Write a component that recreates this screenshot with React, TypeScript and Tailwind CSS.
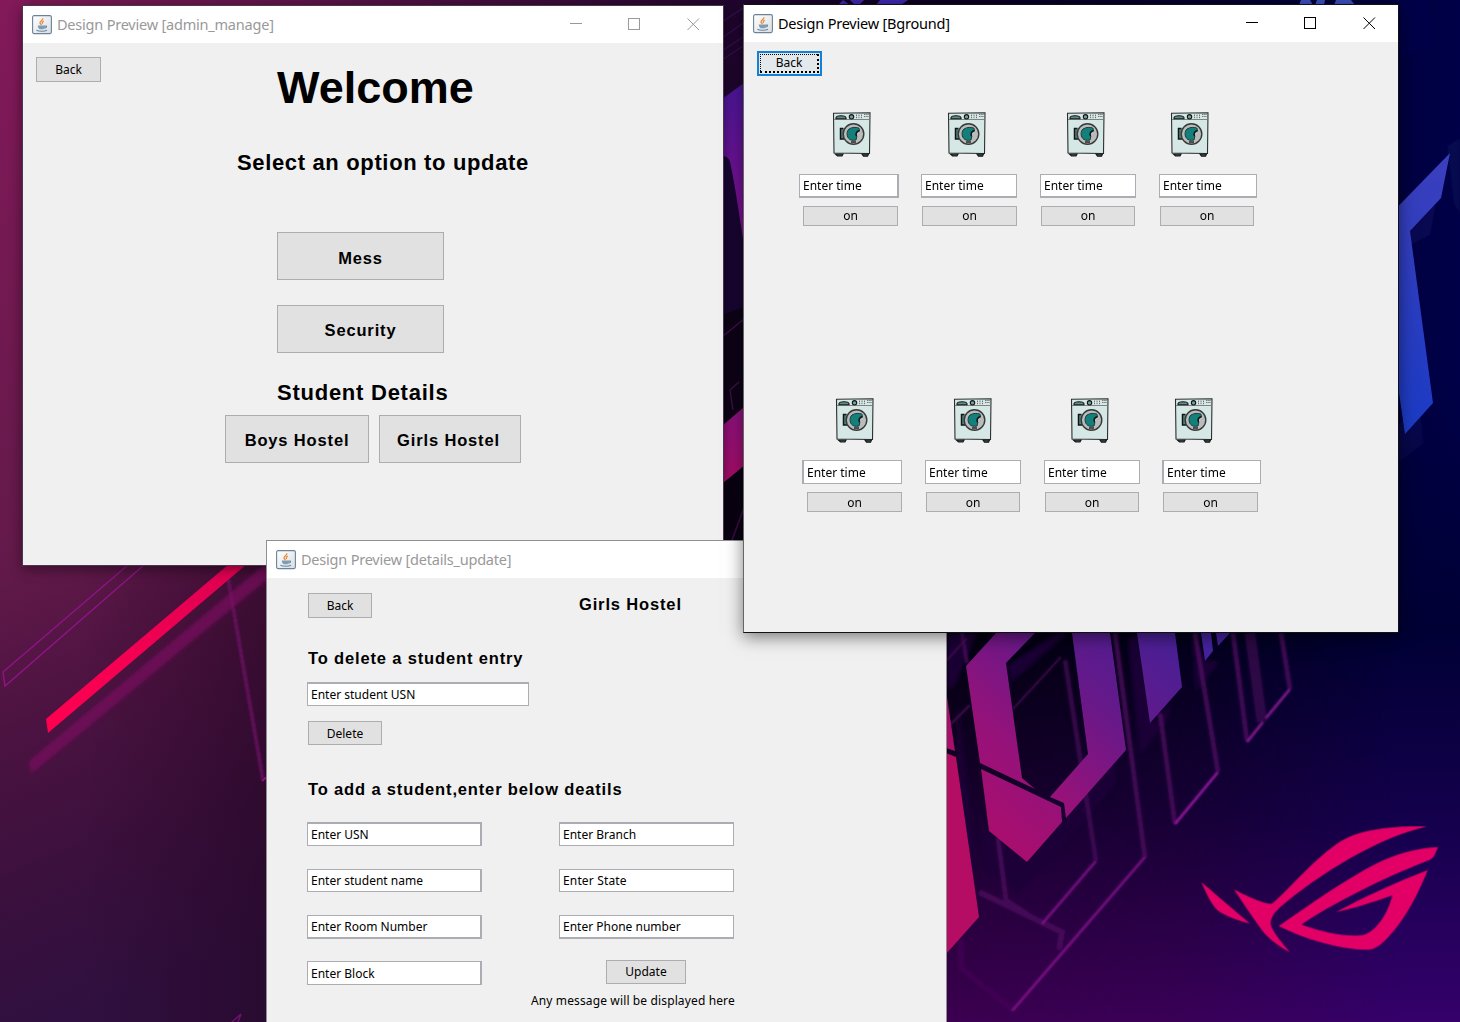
import React from "react";

const UI = "font-['Noto_Sans',sans-serif]";

function JavaIcon() {
  return (
    <svg width="20" height="20" viewBox="0 0 20 20" className="shrink-0">
      <defs>
        <linearGradient id="jv" x1="0" y1="0" x2="1" y2="1">
          <stop offset="0" stopColor="#ffffff" />
          <stop offset="1" stopColor="#d9dde2" />
        </linearGradient>
      </defs>
      <rect x="0.6" y="0.6" width="18.8" height="18" rx="1.5" fill="url(#jv)" stroke="#6b8299" strokeWidth="1.1" />
      <path d="M10.8 3.2C11.4 5.2 7.6 6 8 8c.2 1 1.2 1.300 1.400 2.200M11.800 6.200C10.200 7 9.800 7.800 10.600 9" fill="none" stroke="#ee8a3c" strokeWidth="1.300" />
      <path d="M5.800 10.600h7.400c0 2-.8 3.400-2 3.600H7.900c-1.200-.2-2-1.600-2.100-3.600z" fill="#7e9cb4" />
      <path d="M13 11.200c2.200-.7 2.200 1.400-.6 2M4.400 15.200c2.400 1.300 8 1.300 10.600 0" fill="none" stroke="#6485a0" strokeWidth="1.100" />
    </svg>
  );
}

function TitleBar({ title, active, controls = true }: { title: string; active?: boolean; controls?: boolean }) {
  return (
    <div className={"flex h-[37px] shrink-0 items-center bg-white pl-[9px] " + (active ? "text-black" : "text-[#999999]")}>
      <JavaIcon />
      <span className={"ml-[5px] whitespace-nowrap text-[14.5px] leading-none tracking-[-0.21px] " + UI}>{title}</span>
      {controls && (
        <svg
          width="140"
          height="20"
          viewBox="0 0 140 20"
          className={"ml-auto " + (active ? "mb-px mr-[15px]" : "mb-px mr-[16px]")}
          fill="none"
          stroke="currentColor"
          shapeRendering="crispEdges"
        >
          <path d="M3 9.500H15M61.500 4.500h11v11h-11z" />
          <path d="M120.500 4.500l11.500 11.500M132 4.500L120.500 16" shapeRendering="auto" />
        </svg>
      )}
    </div>
  );
}

function Button({ label, className }: { label: string; className: string }) {
  return (
    <button className={"flex shrink-0 items-center justify-center border border-[#adadad] bg-[#e1e1e1] leading-none text-black " + className}>
      {label}
    </button>
  );
}

const SMALL = "font-['Noto_Sans',sans-serif] text-[12px]";
const BIG = "font-['Liberation_Sans',sans-serif] font-bold text-[16.5px] tracking-[0.85px]";

function Field({ value, className }: { value: string; className: string }) {
  return (
    <div className={"flex shrink-0 items-center whitespace-nowrap border border-[#abadb3] bg-white pl-[3px] text-[12px] leading-none text-black " + UI + " " + className}>
      {value}
    </div>
  );
}

function Washer() {
  return (
    <svg width="40" height="46" viewBox="0 0 40 46" className="block shrink-0">
      <path d="M1.500 1.200L38 .8 37.500 41.500 2 41z" fill="#d6e8e6" stroke="#2b2f30" strokeWidth="1.100" />
      <path d="M2 7.500H38" stroke="#777" strokeWidth=".9" />
      <path d="M4 5.600c1-2.400 9-2.400 10 0v1.100H4z" fill="#5b8f8d" stroke="#141414" strokeWidth="1.100" />
      <circle cx="19.500" cy="4.800" r="2.200" fill="#6ba3a1" stroke="#141414" strokeWidth="1.100" />
      <path d="M24.500 2.500v4M27 2.500v4M29.500 2.500v4M32 4.500h5M32 2.500h5" stroke="#555" strokeWidth=".8" strokeDasharray="1.500 .7" />
      <path d="M11.500 16.500H8.500v10.500h3.500" fill="#4e8583" stroke="#141414" strokeWidth="1.500" />
      <circle cx="21.500" cy="22" r="10.300" fill="#b9bcbb" stroke="#383838" strokeWidth="1.400" />
      <path d="M17 17c3-2 7.500-2 10-.8l.5 2.800c-3 .6-4.200 3-2.700 5.500L24 28c-3.500.8-6 .2-7.500-1.800C14.500 23.500 14.500 19.500 17 17z" fill="#14807c" stroke="#173d3d" strokeWidth="1" />
      <path d="M27.300 18.800c-3 .6-4 3-2.700 5.500" fill="none" stroke="#111" strokeWidth="1.400" />
      <path d="M19 30h5" stroke="#333" strokeWidth="1.600" />
      <path d="M3.500 42h7.500l-1 1.800H5.500zM30 42h6.500l-1 2.200h-4z" fill="#315b59" stroke="#1b1b1b" strokeWidth="1.200" />
    </svg>
  );
}

function Wallpaper() {
  return (
    <svg width="1460" height="1022" viewBox="0 0 1460 1022" className="absolute inset-0">
      <defs>
        <linearGradient id="bg" x1="0" y1="0" x2="1" y2="0">
          <stop offset="0" stopColor="#7e1a54" />
          <stop offset=".2" stopColor="#5e1448" />
          <stop offset=".5" stopColor="#21062c" />
          <stop offset=".64" stopColor="#0c0020" />
          <stop offset=".86" stopColor="#030030" />
          <stop offset="1" stopColor="#000048" />
        </linearGradient>
        <linearGradient id="lt" x1="0" y1="0" x2="0" y2="1">
          <stop offset="0" stopColor="#83195a" />
          <stop offset="1" stopColor="#631a4a" />
        </linearGradient>
        <linearGradient id="lb" x1="0" y1="0" x2=".25" y2="1">
          <stop offset="0" stopColor="#631a4a" />
          <stop offset=".35" stopColor="#4c1341" />
          <stop offset=".7" stopColor="#3a103d" />
          <stop offset="1" stopColor="#2f1040" />
        </linearGradient>
        <linearGradient id="ld" x1="0" y1="0" x2="1" y2="0">
          <stop offset="0" stopColor="#2a0420" stopOpacity="0" />
          <stop offset="1" stopColor="#22041f" stopOpacity=".5" />
        </linearGradient>
        <linearGradient id="rb" x1="0" y1="0" x2="0" y2="1">
          <stop offset="0" stopColor="#04000f" />
          <stop offset=".45" stopColor="#17002b" />
          <stop offset="1" stopColor="#3c0050" />
        </linearGradient>
        <linearGradient id="rv" x1="0" y1="0" x2="0" y2="1">
          <stop offset="0" stopColor="#000035" />
          <stop offset=".5" stopColor="#15004d" />
          <stop offset="1" stopColor="#35006a" />
        </linearGradient>
        <linearGradient id="re" x1="0" y1="0" x2="0" y2="1">
          <stop offset="0" stopColor="#000035" stopOpacity="0" />
          <stop offset="1" stopColor="#000035" />
        </linearGradient>
        <linearGradient id="fade" x1="0" y1="0" x2="1" y2="0">
          <stop offset="0" stopColor="#000" />
          <stop offset=".45" stopColor="#444" />
          <stop offset=".88" stopColor="#fff" />
        </linearGradient>
        <mask id="fm"><rect x="946" y="630" width="514" height="392" fill="url(#fade)" /></mask>
        <linearGradient id="ltr" gradientUnits="userSpaceOnUse" x1="980" y1="860" x2="1180" y2="640">
          <stop offset="0" stopColor="#b00c69" />
          <stop offset=".35" stopColor="#95127a" />
          <stop offset=".68" stopColor="#64198a" />
          <stop offset="1" stopColor="#472096" />
        </linearGradient>
        <linearGradient id="pv" x1="0" y1="0" x2="0" y2="1">
          <stop offset="0" stopColor="#4c169c" />
          <stop offset="1" stopColor="#8a1090" />
        </linearGradient>
        <linearGradient id="pk" x1="0" y1="0" x2="0" y2="1">
          <stop offset="0" stopColor="#8c1282" />
          <stop offset="1" stopColor="#ad0d68" />
        </linearGradient>
        <linearGradient id="bl" x1="0" y1="0" x2="0" y2="1">
          <stop offset="0" stopColor="#3b3fbd" />
          <stop offset="1" stopColor="#1b3bc4" />
        </linearGradient>
        <linearGradient id="rd" x1="0" y1="1" x2="1" y2="0">
          <stop offset="0" stopColor="#ff0050" />
          <stop offset=".4" stopColor="#f50052" />
          <stop offset="1" stopColor="#dc0050" />
        </linearGradient>
        <filter id="b2"><feGaussianBlur stdDeviation="2" /></filter>
        <filter id="b1"><feGaussianBlur stdDeviation="0.8" /></filter>
      </defs>
      <rect width="1460" height="1022" fill="url(#bg)" />
      <rect width="30" height="560" fill="url(#lt)" />
      <rect y="560" width="280" height="462" fill="url(#lb)" />
      <rect y="560" x="80" width="200" height="462" fill="url(#ld)" />

      {/* light streaks at the left */}
      <g fill="none" stroke="#8d1386" strokeWidth="1.500">
        <path d="M128 565L3 672 5 686 144 565" />
        <path d="M232 1022L241 1014 238 1022" opacity=".7" />
      </g>
      <path d="M228 578L263 780" stroke="#74136c" strokeWidth="3.500" opacity=".7" filter="url(#b1)" />
      <path d="M262 781l6-5" stroke="#a01890" strokeWidth="1.500" />
      <path d="M29 761L270 560v17L31 774z" fill="#7c1060" opacity=".7" filter="url(#b2)" />
      <path d="M46 719L229 564h18L48 733z" fill="url(#rd)" />

      {/* strip between the upper windows */}
      <rect x="722" y="0" width="24" height="545" fill="#190633" />
      <path d="M722 0h24v90l-24 14z" fill="#20062e" />
      <path d="M722 22l24-16M722 38l24-17M722 51l24-16M722 60l24-16" stroke="#34104f" strokeWidth="1.300" />
      <path d="M722 99L744 83V245C738 205 734 180 730 162 728 155 722 156 722 156z" fill="url(#pv)" />
      <path d="M722 315l22-8v103l-22 14z" fill="#0e0417" />
      <path d="M722 337L744 319M733 410l-3-20 9-8" fill="none" stroke="#45104f" strokeWidth="1.300" />
      <path d="M722 426L744 407V466L722 484z" fill="url(#pk)" />
      <path d="M722 484L744 466V545H722z" fill="#0a0212" />
      <path d="M732 540l12-32" stroke="#3d0d49" strokeWidth="1.500" />

      {/* top edge */}
      <path d="M838 5l5-5 7 5zM850 0h14l-5 5h-4zM880 0h28l-7 5h-25z" fill="#3f29ae" />
      <path d="M1299 5l2-5h9l3 5zM1315 5l2-5h8l-1 5zM1336 0h15l4 5h-21z" fill="#3c50bd" />

      {/* right edge */}
      <path d="M1399 60l33-17-4-43h-29z" fill="#06064e" opacity=".6" filter="url(#b1)" />
      <path d="M1410 245l20-10 6-32-26 28zM1399 462l24-18-3-40-21 20z" fill="#0b0f58" opacity=".7" filter="url(#b1)" />
      <path d="M1447 146l13-8v76l-6-10z" fill="#091256" opacity=".5" filter="url(#b1)" />
      <rect x="1398" y="380" width="62" height="250" fill="url(#re)" />
      <path d="M1398 206.500L1450 153 1441 198 1410 231 1433 403 1405 434 1398 386z" fill="url(#bl)" />

      {/* lower right */}
      <rect x="946" y="630" width="514" height="392" fill="url(#rb)" />
      <rect x="946" y="630" width="514" height="392" fill="url(#rv)" mask="url(#fm)" />
      <g fill="#1c0638" filter="url(#b2)" opacity=".9">
        <path d="M947 633h30l-22 52-8 5zM957 700l20 160-10 20-10-120zM1008 665l50-32h10l-58 50zM1128 640l12 115 26-32 6-20-20 20-15-90zM1192 633l4 58 24-30-15 0zM978 808l8 60 32 24 44-46 52-60 3-30-90 108-38-30z" />
      </g>
      <g fill="none" stroke="#4b0a5c" strokeWidth="5" filter="url(#b1)" opacity=".8">
        <path d="M1115 633L1145 858" />
        <path d="M1195 633L1218 772" />
        <path d="M1160 713L1175 824" />
        <path d="M1233 633L1247 741" />
        <path d="M1281 633L1290 689" />
        <path d="M1250 633L1262 722" strokeWidth="11" opacity=".7" />
        <path d="M1065 660L1096 861" opacity=".8" />
        <path d="M998 838L1006 900 1029 915" />
        <path d="M979 892L1062 932 1059 950" strokeWidth="6" />
        <path d="M961 940V968L1012 1009" strokeWidth="6" opacity=".6" />
        <path d="M962 633L967 663" strokeWidth="4" />
      </g>
      <g fill="none" stroke="#8b1790" strokeWidth="1.800" filter="url(#b1)">
        <path d="M1218 772L1175 824" stroke="#a91db0" strokeWidth="2.200" />
        <path d="M1247 742L1263 722M1266 718L1290 689" stroke="#9a219f" strokeWidth="2.200" />
        <path d="M1145 857L1012 1011" strokeWidth="2.200" />
        <path d="M1096 861L1042 924" strokeWidth="2.200" />
        <path d="M1061 657L1013 709M970 705l-20 20M947 660l20-22" stroke="#4a0d55" />
      </g>
      <g fill="url(#ltr)">
        <path d="M966 666L996 633H1035L1006 663 1022 778 1035 789 980 763z" />
        <path d="M1072 633H1110L1126 750 1066 818 1064 803 1050 797 1088 754z" />
        <path d="M981 769L1061 807 1062 822 1027 862 989 831z" />
        <path d="M1137 633H1175L1182 687 1150 723z" />
      </g>
      <path d="M1201 633H1211L1213 651 1205 661zM1216 633H1230L1218 646z" fill="#45229f" />
      <path d="M946 753L956 757 979 917 946 954z" fill="#b50c64" />
      <path d="M946 690L955 751 946 748z" fill="#a80e6c" />

      {/* ROG eye emblem */}
      <g transform="translate(1180 810) scale(.33333)" fill="#e30066">
        <path d="M64 216C90 238 172 308 210 340 182 334 130 316 112 300 94 284 74 240 64 216z" />
        <path d="M162 238C192 254 254 284 276 281 316 250 424 120 500 84 560 54 670 46 740 50 600 80 420 190 300 292 276 314 268 334 274 350 284 374 312 406 330 426 300 412 262 384 244 358 214 316 184 272 162 238z" />
        <path d="M296 348C400 276 500 206 590 160 650 130 712 114 774 111L766 130C760 146 752 148 738 154 610 204 450 284 364 344 430 368 510 384 554 374 600 356 628 294 637 256 580 276 520 296 468 306 550 262 640 220 743 180 720 240 680 318 640 364 620 386 600 412 570 419 480 420 372 386 296 348z" />
      </g>
    </svg>
  );
}

type Machine = { cell: string; washer: string; field: string; btn: string };

const upperMachines: Machine[] = [
  { cell: "w-[122px]", washer: "ml-[33px]", field: "w-[100px] border-r-2 border-b-2", btn: "ml-[4px] w-[95px]" },
  { cell: "w-[119px]", washer: "ml-[26px]", field: "w-[96px] border-b-2", btn: "ml-[1px] w-[95px]" },
  { cell: "w-[119px]", washer: "ml-[26px]", field: "w-[96px] border-b-2", btn: "ml-[1px] w-[94px]" },
  { cell: "w-[119px]", washer: "ml-[11px]", field: "w-[98px] border-b-2", btn: "ml-[1px] w-[94px]" },
];

const lowerMachines: Machine[] = [
  { cell: "w-[123px]", washer: "ml-[33px]", field: "w-[100px] border-l-2 pl-[2px]", btn: "ml-[5px] w-[95px]" },
  { cell: "w-[119px]", washer: "ml-[28px]", field: "w-[96px]", btn: "ml-[1px] w-[94px]" },
  { cell: "w-[118px]", washer: "ml-[26px]", field: "w-[96px]", btn: "ml-[1px] w-[94px]" },
  { cell: "w-[119px]", washer: "ml-[12px]", field: "w-[99px] border-l-2 pl-[2px]", btn: "ml-[1px] w-[95px]" },
];

function MachineRow({ machines, className, text = "" }: { machines: Machine[]; className: string; text?: string }) {
  return (
    <div className={"flex " + className}>
      {machines.map((m, i) => (
        <div key={i} className={"flex shrink-0 flex-col " + m.cell}>
          <div className={m.washer}><Washer /></div>
          <Field value="Enter time" className={"mt-4 h-6 " + m.field + " " + text} />
          <Button label="on" className={SMALL + " mt-2 h-5 " + m.btn + " " + text} />
        </div>
      ))}
    </div>
  );
}

function AdminWindow() {
  return (
    <section className="absolute left-[22px] top-[5px] flex h-[561px] w-[702px] flex-col border border-[#4b3550] bg-[#f0f0f0] shadow-[0_3px_12px_rgba(0,0,0,0.45)]">
      <TitleBar title="Design Preview [admin_manage]" />
      <div className="flex h-[500px] flex-col font-['Liberation_Sans',sans-serif] font-bold leading-none text-black">
        <div className="flex items-start">
          <Button label="Back" className={SMALL + " ml-[13px] mt-[14px] h-[25px] w-[65px] font-normal"} />
          <h1 className="ml-[176px] mt-[22px] text-[45px] leading-[45px]">Welcome</h1>
        </div>
        <h2 className="ml-[214px] mt-[42px] text-[22px] leading-[22px] tracking-[0.65px]">Select an option to update</h2>
        <Button label="Mess" className={BIG + " ml-[254px] mt-[58px] h-12 w-[167px] pt-[4px]"} />
        <Button label="Security" className={BIG + " ml-[254px] mt-[25px] h-12 w-[167px] pt-[2px]"} />
        <h2 className="ml-[254px] mt-[29px] text-[22px] leading-[22px] tracking-[0.75px]">Student Details</h2>
        <div className="ml-[202px] mt-[11px] flex gap-[10px]">
          <Button label="Boys Hostel" className={BIG + " h-12 w-[144px] pt-[2px]"} />
          <Button label="Girls Hostel" className={BIG + " h-12 w-[142px] pr-[3px] pt-[2px]"} />
        </div>
      </div>
    </section>
  );
}

function DetailsWindow() {
  const heading = BIG + " leading-[17px] whitespace-nowrap";
  return (
    <section className="absolute left-[266px] top-[540px] flex h-[482px] w-[681px] flex-col overflow-hidden border border-b-0 border-[#8f8f8f] bg-[#f0f0f0]">
      <TitleBar title="Design Preview [details_update]" controls={false} />
      <div className="flex flex-col items-start pl-[40px] text-black">
        <div className="flex items-start">
          <Button label="Back" className={SMALL + " ml-px mt-[15px] h-[25px] w-[64px]"} />
          <h3 className={heading + " ml-[207px] mt-[18px]"}>Girls Hostel</h3>
        </div>
        <h3 className={heading + " ml-px mt-[32px]"}>To delete a student entry</h3>
        <Field value="Enter student USN" className="mt-[15px] h-6 w-[222px] border-t-2" />
        <Button label="Delete" className={SMALL + " ml-px mt-[15px] h-6 w-[74px] pt-[2px]"} />
        <h3 className={heading + " ml-px mt-[36px]"}>To add a student,enter below deatils</h3>
        <div className="mt-[24px] flex gap-[77px]">
          <div className="flex flex-col">
            <Field value="Enter USN" className="h-6 w-[175px] border-r-2 border-t-2" />
            <Field value="Enter student name" className="mt-[23px] h-[23px] w-[175px] border-r-2" />
            <Field value="Enter Room Number" className="mt-[23px] h-6 w-[175px] border-b-2 border-r-2" />
            <Field value="Enter Block" className="mt-[22px] h-6 w-[175px] border-r-2 pt-[2px]" />
          </div>
          <div className="flex flex-col">
            <Field value="Enter Branch" className="h-6 w-[175px] border-t-2" />
            <Field value="Enter State" className="mt-[23px] h-[23px] w-[175px] tracking-[0.15px]" />
            <Field value="Enter Phone number" className="mt-[23px] h-6 w-[175px] border-b-2" />
            <Button label="Update" className={SMALL + " ml-[47px] mt-[21px] h-6 w-[80px]"} />
            <p className="-ml-[28px] mt-[10px] whitespace-nowrap font-['Noto_Sans',sans-serif] text-[12px] leading-[14px] tracking-[0.13px]">Any message will be displayed here</p>
          </div>
        </div>
      </div>
    </section>
  );
}

function BackgroundWindow() {
  return (
    <section className="absolute left-[743px] top-[4px] flex h-[629px] w-[656px] flex-col border border-[#111118] border-l-[#666] bg-[#f0f0f0] shadow-[0_4px_16px_rgba(0,0,0,0.5)]">
      <TitleBar title="Design Preview [Bground]" active />
      <div className="flex flex-col">
        <button className="ml-[13px] mt-[9px] flex h-[25px] w-[65px] border-2 border-[#1580d8] bg-[#e3e8eb] p-px">
          <span className={"flex flex-1 items-center justify-center self-stretch border border-b-2 border-r-2 border-dotted border-black leading-none " + SMALL}>Back</span>
        </button>
        <MachineRow machines={upperMachines} className="ml-[55px] mt-9" />
        <MachineRow machines={lowerMachines} className="ml-[58px] mt-[172px]" text="pt-[2px]" />
      </div>
    </section>
  );
}

export default function App() {
  return (
    <main className="relative h-[1022px] w-[1460px] overflow-hidden bg-[#19062c]">
      <Wallpaper />
      <AdminWindow />
      <DetailsWindow />
      <BackgroundWindow />
    </main>
  );
}
